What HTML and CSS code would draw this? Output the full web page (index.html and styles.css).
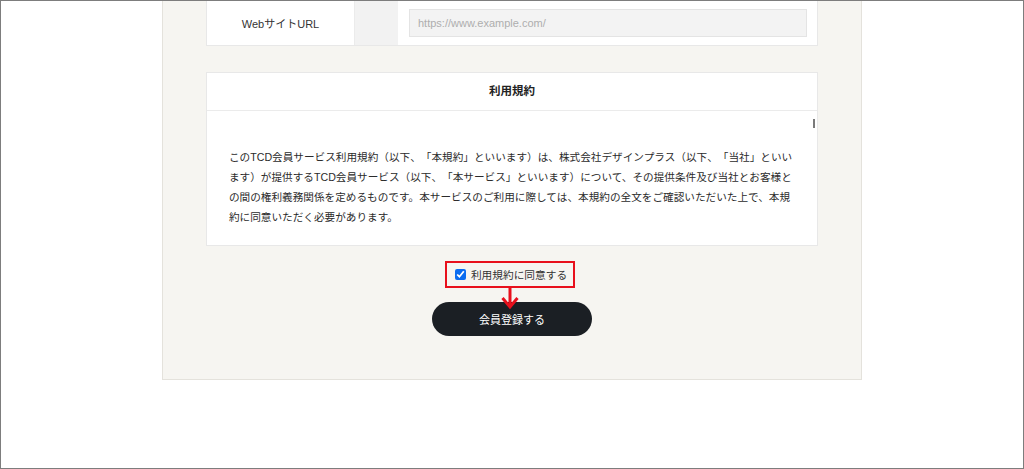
FILE: index.html
```html
<!DOCTYPE html>
<html lang="ja">
<head>
    <meta charset="UTF-8">
    <meta name="viewport" content="width=device-width, initial-scale=1.0">
    <title>会員登録</title>
    <link rel="stylesheet" href="styles.css">
</head>
<body>
    <div class="frame">
        <div class="panel">
            <div class="form-table">
                <div class="form-label">WebサイトURL</div>
                <div class="form-gutter"></div>
                <div class="form-field">
                    <input class="text-input" type="text" placeholder="https://www.example.com/">
                </div>
            </div>

            <div class="terms-card">
                <div class="terms-title">利用規約</div>
                <div class="terms-body">
                    <p class="terms-text">このTCD会員サービス利用規約（以下、「本規約」といいます）は、株式会社デザインプラス（以下、「当社」といい<br>ます）が提供するTCD会員サービス（以下、「本サービス」といいます）について、その提供条件及び当社とお客様と<br>の間の権利義務関係を定めるものです。本サービスのご利用に際しては、本規約の全文をご確認いただいた上で、本規<br>約に同意いただく必要があります。</p>
                    <span class="scroll-thumb"></span>
                </div>
            </div>

            <div class="agree-row">
                <label class="agree">
                    <input class="agree-check" type="checkbox" checked>
                    <span>利用規約に同意する</span>
                    <!-- 注釈の矢印 -->
                    <svg class="agree-arrow" viewBox="0 0 20 24" width="20" height="24">
                        <line x1="10" y1="0" x2="10" y2="21" />
                        <polyline points="2.5,12 10,21 17.5,12" />
                    </svg>
                </label>
            </div>

            <div class="submit-row">
                <button class="submit-btn" type="button">会員登録する</button>
            </div>
        </div>
    </div>
</body>
</html>
```

FILE: styles.css
```css
* {
    margin: 0;
    padding: 0;
    box-sizing: border-box;
}

body {
    font-family: 'Liberation Sans', 'Noto Sans CJK JP', sans-serif;
    color: #333;
    background: #fff;
}

.frame {
    width: 1024px;
    height: 469px;
    border: 1px solid #7d7d7d;
    overflow: hidden;
    background: #fff;
}

.panel {
    width: 700px;
    margin: 0 auto;
    padding: 0 43px 43px;
    background: #f6f5f1;
    border: 1px solid #e4e2dc;
    border-top: none;
}

/* 入力行 */
.form-table {
    display: grid;
    grid-template-columns: 148px 43px 1fr;
    height: 46px;
    margin-top: -1px;
    background: #fff;
    border: 1px solid #e8e8e8;
}

.form-label {
    display: flex;
    align-items: center;
    justify-content: center;
    font-size: 11px;
    color: #333;
    border-right: 1px solid #ebebeb;
}

.form-gutter {
    background: #f2f2f2;
}

.form-field {
    padding: 8px 10px 0 11px;
}

.text-input {
    display: block;
    width: 100%;
    height: 28px;
    padding: 0 8px;
    font-family: inherit;
    font-size: 11px;
    background: #f3f3f3;
    border: 1px solid #e4e4e4;
    outline: none;
}

.text-input::placeholder {
    color: #aeaeae;
}

/* 利用規約 */
.terms-card {
    margin-top: 26px;
    background: #fff;
    border: 1px solid #e8e8e8;
}

.terms-title {
    height: 38px;
    line-height: 37px;
    text-align: center;
    font-size: 11.5px;
    font-weight: bold;
    color: #222;
    border-bottom: 1px solid #ebebeb;
}

.terms-body {
    position: relative;
    height: 134px;
    padding: 36px 22px 0;
    overflow: hidden;
}

.terms-text {
    font-size: 10.63px;
    line-height: 20px;
    color: #2b2b2b;
    white-space: nowrap;
    text-spacing-trim: space-all;
}

.scroll-thumb {
    position: absolute;
    top: 8px;
    right: 2px;
    width: 2px;
    height: 9px;
    background: #7a7a7a;
}

/* 同意チェック */
.agree-row {
    display: flex;
    justify-content: center;
    margin-top: 15px;
}

.agree {
    position: relative;
    display: flex;
    align-items: center;
    gap: 5px;
    height: 27px;
    padding: 0 6px 0 8px;
    margin-right: 4px;
    border: 2px solid #e8101c;
    font-size: 10.7px;
    color: #333;
}

.agree-check {
    width: 11px;
    height: 11px;
    margin: 0;
    accent-color: #0a6cf0;
}

.agree-arrow {
    position: absolute;
    top: 100%;
    left: 50%;
    margin-left: -10px;
    stroke: #e8101c;
    stroke-width: 3;
    fill: none;
    z-index: 2;
}

/* 送信ボタン */
.submit-row {
    display: flex;
    justify-content: center;
    margin-top: 14px;
}

.submit-btn {
    width: 160px;
    height: 34px;
    border: none;
    border-radius: 17px;
    background: #1b1f24;
    color: #fff;
    font-family: inherit;
    font-size: 11px;
}
```
